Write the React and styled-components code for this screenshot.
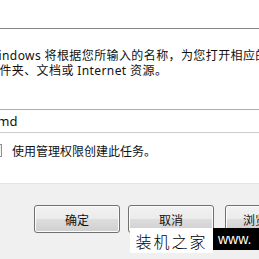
import React from "react";
import styled, { createGlobalStyle } from "styled-components";

const GlobalStyle = createGlobalStyle`
  html, body {
    margin: 0;
    padding: 0;
    background: #ffffff;
  }
`;

const Page = styled.div`
  position: relative;
  width: 259px;
  height: 259px;
  overflow: hidden;
  background: #ffffff;
  display: flex;
  flex-direction: column;
  font-family: "Noto Sans", "Noto Sans CJK SC", sans-serif;
  font-size: 12px;
  color: #111;
`;

const TitleArea = styled.div`
  height: 28px;
  flex-shrink: 0;
  border-bottom: 1px solid #858585;
`;

const Content = styled.div`
  flex: 1;
  display: flex;
  flex-direction: column;
`;

const Description = styled.p`
  margin: 19px 0 0 -13px;
  width: 300px;
  line-height: 15px;
  letter-spacing: 0.4px;
  white-space: nowrap;
`;

const InputBox = styled.div`
  margin: 31px 0 0 -20px;
  width: 300px;
  height: 22px;
  border: 1px solid #c9ccd1;
  border-top-color: #abadb3;
  padding-left: 10px;
  display: flex;
  align-items: center;
  font-size: 13px;
  box-sizing: content-box;
`;

const CheckRow = styled.label`
  margin: 11px 0 0 -11px;
  display: flex;
  align-items: center;
  gap: 10px;
  height: 13px;
`;

const CheckBox = styled.span`
  width: 11px;
  height: 11px;
  border: 1px solid #8e8f8f;
  background: linear-gradient(135deg, #dcdcdc, #fbfbfb);
  flex-shrink: 0;
`;

const Footer = styled.div`
  height: 76px;
  flex-shrink: 0;
  background: #f0f0f0;
  border-top: 1px solid #e4e4e4;
  display: flex;
  align-items: flex-start;
  padding: 21px 0 0 34px;
  gap: 8px;
  box-sizing: border-box;
`;

const Button = styled.button`
  width: 86px;
  height: 28px;
  flex-shrink: 0;
  margin-left: ${(p) => (p.$extra ? "3px" : "0")};
  border: 1px solid #707070;
  border-radius: 3px;
  background: linear-gradient(
    to bottom,
    #f2f2f2 0%,
    #ebebeb 50%,
    #dddddd 51%,
    #cfcfcf 100%
  );
  box-shadow: inset 0 0 0 1px #fcfcfc;
  font-family: "Noto Sans CJK SC", sans-serif;
  font-size: 12px;
  color: #111;
  padding: 0;
  white-space: nowrap;
`;

const Watermark = styled.div`
  position: absolute;
  left: 130px;
  top: 228px;
  display: flex;
  align-items: flex-start;
`;

const MarkName = styled.span`
  width: 83px;
  height: 25px;
  background: #ffffff;
  display: flex;
  align-items: center;
  justify-content: center;
  font-family: "Noto Sans CJK SC", serif;
  font-weight: 300;
  font-size: 16px;
  letter-spacing: 2px;
  color: #000;
`;

const MarkSite = styled.span`
  width: 46px;
  height: 22px;
  background: #000;
  color: #fff;
  display: flex;
  align-items: center;
  padding-left: 5px;
  box-sizing: border-box;
  font-family: "Liberation Sans", Arial, sans-serif;
  font-size: 14px;
`;

export default function App() {
  return (
    <>
      <GlobalStyle />
      <Page>
        <TitleArea />
        <Content>
          <Description>
            Windows 将根据您所输入的名称，为您打开相应的程序、
            <br />
            文件夹、文档或 Internet 资源。
          </Description>
          <InputBox>cmd</InputBox>
          <CheckRow>
            <CheckBox />
            使用管理权限创建此任务。
          </CheckRow>
        </Content>
        <Footer>
          <Button>确定</Button>
          <Button>取消</Button>
          <Button $extra>浏览(B)...</Button>
        </Footer>
        <Watermark>
          <MarkName>装机之家</MarkName>
          <MarkSite>www.</MarkSite>
        </Watermark>
      </Page>
    </>
  );
}
